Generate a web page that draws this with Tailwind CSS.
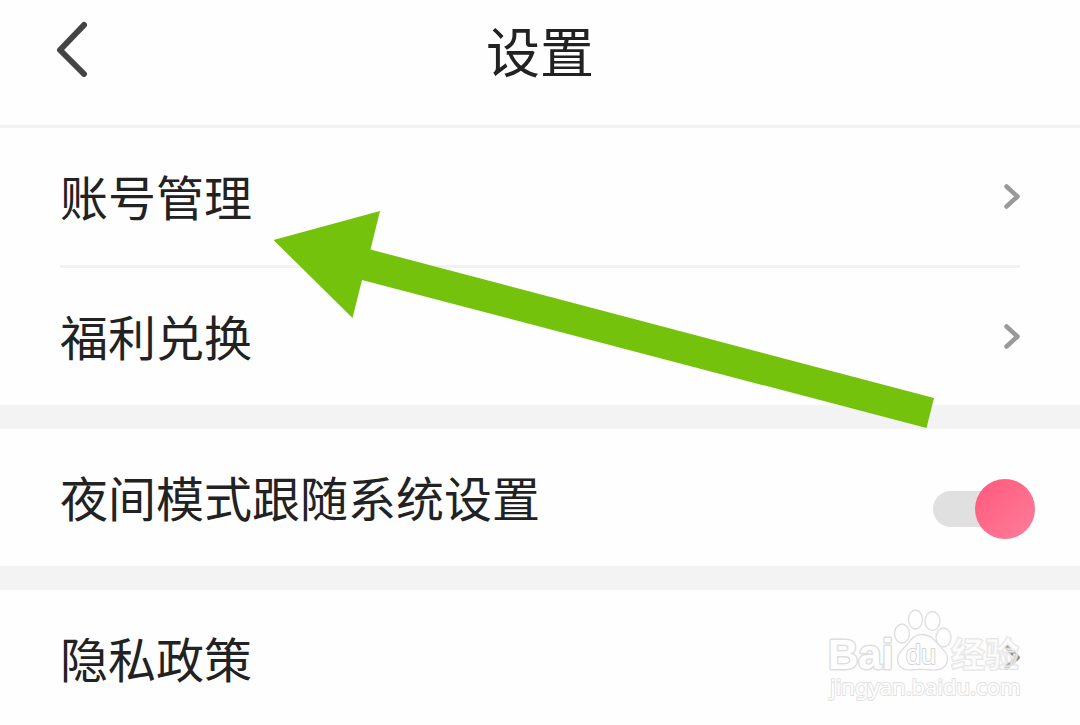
<!DOCTYPE html>
<html lang="zh-CN">
<head>
<meta charset="utf-8">
<meta name="viewport" content="width=device-width, initial-scale=1">
<title>设置</title>
<script src="https://cdn.jsdelivr.net/npm/@tailwindcss/browser@4"></script>
</head>
<body class="relative min-h-screen overflow-x-hidden bg-[#fefefe] font-['Noto_Sans_CJK_SC',sans-serif] text-5xl text-[#222]">
  <header class="grid grid-cols-[1fr_auto_1fr] items-center border-b-3 border-[#f1f1f1] px-14 pt-[9px] pb-[35px]">
    <button type="button" aria-label="返回" class="justify-self-start pb-0.5">
      <svg class="block h-14 w-8" viewBox="0 0 32 56" fill="none" stroke="#444" stroke-width="6" stroke-linecap="round" stroke-linejoin="round"><path d="M28 4 4 29l24 24"/></svg>
    </button>
    <h1 class="text-[54px] leading-[81px]">设置</h1>
  </header>

  <main>
    <nav class="px-[60px]">
      <a href="#account" class="flex items-center justify-between border-b-3 border-[#f1f1f1]">
        <span class="pt-[31px] pb-[34px] leading-[72px]">账号管理</span>
        <svg class="h-[26px] w-4" viewBox="0 0 16 26" fill="none" stroke="#999" stroke-width="4.500" stroke-linecap="round" stroke-linejoin="round"><path d="M2.500 2.500l11 10-11 10"/></svg>
      </a>
      <a href="#benefits" class="flex items-center justify-between">
        <span class="pt-[31px] pb-[34px] leading-[72px]">福利兑换</span>
        <svg class="h-[26px] w-4" viewBox="0 0 16 26" fill="none" stroke="#999" stroke-width="4.500" stroke-linecap="round" stroke-linejoin="round"><path d="M2.500 2.500l11 10-11 10"/></svg>
      </a>
    </nav>

    <section class="flex items-end justify-between border-y-24 border-[#f3f3f3] pr-[45px] pl-[60px]">
      <label for="night" class="pt-[31px] pb-[34px] leading-[72px]">夜间模式跟随系统设置</label>
      <input id="night" type="checkbox" role="switch" checked class="relative mb-[27px] h-[60px] w-[102px] shrink-0 appearance-none before:absolute before:inset-x-0 before:top-3 before:h-9 before:rounded-full before:bg-[#e0e0e0] after:absolute after:top-0 after:left-0 after:size-[60px] after:rounded-full after:bg-linear-to-br after:from-[#ff587c] after:to-[#ff7c9a] checked:before:right-5 checked:after:right-0 checked:after:left-auto">
    </section>

    <nav class="px-[60px]">
      <a href="#privacy" class="flex items-center justify-between">
        <span class="pt-[31px] pb-8 leading-[72px]">隐私政策</span>
        <svg class="h-[26px] w-4" viewBox="0 0 16 26" fill="none" stroke="#888" stroke-width="4.500" stroke-linecap="round" stroke-linejoin="round"><path d="M2.500 2.500l11 10-11 10"/></svg>
      </a>
    </nav>
  </main>

  <!-- Pointer to the account row -->
  <svg class="pointer-events-none absolute top-[210px] left-[273px] h-[219px] w-[662px]" viewBox="273 210 662 219" aria-hidden="true"><path fill="#75c20c" d="M273.500 240 380 211l-9.500 38.500L934 398l-7.500 30L362 280l-9.500 38z"/></svg>

  <!-- Site watermark -->
  <svg class="pointer-events-none absolute top-[600px] right-[50px] h-[110px] w-[208px]" viewBox="822 600 208 110" role="img" aria-label="Baidu 经验" fill="#fefefe" stroke="#dedede" stroke-linejoin="round">
    <text x="828" y="669" font-size="42" font-weight="700" font-family="'Liberation Sans', sans-serif" stroke-width="3" paint-order="stroke">Bai</text>
    <g stroke-width="1.300">
      <ellipse cx="902" cy="633.500" rx="7.500" ry="9.500"/>
      <ellipse cx="915.500" cy="619.500" rx="7" ry="9.500"/>
      <ellipse cx="932.500" cy="621" rx="7.500" ry="9.500"/>
      <ellipse cx="943.500" cy="637.500" rx="7.500" ry="9.500"/>
      <path d="M922 634.500c-7 0-10.500 4-14 9s-10 8-10.500 15c0 9 6 12 13 11.500 5-.5 17-.5 22 0 9 .5 15-3 15-12-.5-6-5-9-10-14.500-4-5-8-9-15.500-9z"/>
    </g>
    <text x="906" y="664" font-size="27" font-family="'Liberation Sans', sans-serif" stroke-width="2" stroke="#d6d6d6" paint-order="stroke">du</text>
    <text x="951" y="667" font-size="34" font-weight="700" font-family="'Noto Sans CJK SC', sans-serif" stroke-width="2" paint-order="stroke" fill-opacity=".6" stroke-opacity=".8">经验</text>
    <text x="830" y="695" font-size="22" font-family="'Noto Sans', sans-serif" stroke-width="2" paint-order="stroke" stroke="#e2e2e2">jingyan.baidu.com</text>
  </svg>
</body>
</html>
